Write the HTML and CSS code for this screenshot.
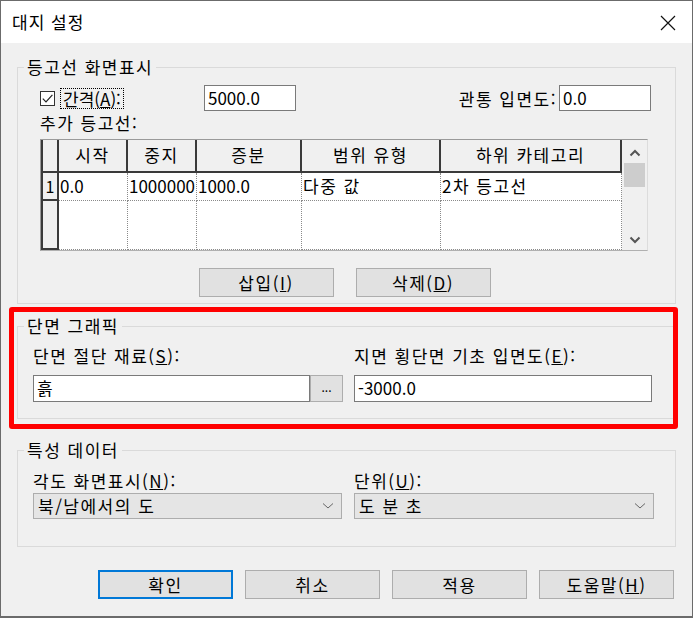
FILE: index.html
```html
<!DOCTYPE html>
<html lang="ko">
<head>
<meta charset="utf-8">
<title>대지 설정</title>
<link rel="stylesheet" href="styles.css">
</head>
<body>
<div class="win">
  <div class="titlebar">
    <span class="title">대지 설정</span>
    <svg class="close" width="16" height="16" viewBox="0 0 16 16"><path d="M1 1 L15 15 M15 1 L1 15" stroke="#111" stroke-width="1.2" fill="none"/></svg>
  </div>
  <div class="content">
    <fieldset class="grp g1">
      <legend>등고선 화면표시</legend>
      <div class="row1">
        <div class="chk-wrap">
          <span class="chk"><svg width="13" height="13" viewBox="0 0 13 13"><path d="M1.8 6.6 L5 9.8 L11.4 2.8" stroke="#222" stroke-width="1.2" fill="none"/></svg></span>
          <span class="focus">간격(<u>A</u>):</span>
        </div>
        <div class="tb w92">5000.0</div>
        <span class="lbl-right">관통 입면도:</span>
        <div class="tb w92">0.0</div>
      </div>
      <div class="lbl2">추가 등고선:</div>
      <div class="tbl">
        <div class="grid">
          <div class="hc corner"></div>
          <div class="hc">시작</div>
          <div class="hc">중지</div>
          <div class="hc">증분</div>
          <div class="hc">범위 유형</div>
          <div class="hc">하위 카테고리</div>
          <div class="rh">1</div>
          <div class="dc">0.0</div>
          <div class="dc">1000000</div>
          <div class="dc">1000.0</div>
          <div class="dc ko">다중 값</div>
          <div class="dc ko">2차 등고선</div>
          <div class="rh"></div>
          <div class="dc"></div>
          <div class="dc"></div>
          <div class="dc"></div>
          <div class="dc"></div>
          <div class="dc"></div>
        </div>
        <div class="sbar">
          <svg class="arr" width="12" height="8" viewBox="0 0 12 8"><path d="M1.5 6.5 L6 2 L10.5 6.5" stroke="#555" stroke-width="2" fill="none"/></svg>
          <div class="thumb"></div>
          <div class="sfill"></div>
          <svg class="arr" width="12" height="8" viewBox="0 0 12 8"><path d="M1.5 1.5 L6 6 L10.5 1.5" stroke="#555" stroke-width="2" fill="none"/></svg>
        </div>
      </div>
      <div class="btnrow">
        <div class="btn">삽입(<u>I</u>)</div>
        <div class="btn">삭제(<u>D</u>)</div>
      </div>
    </fieldset>

    <fieldset class="grp g2">
      <legend>단면 그래픽</legend>
      <div class="cols2">
        <div class="lbl">단면 절단 재료(<u>S</u>):</div>
        <div class="lbl">지면 횡단면 기초 입면도(<u>E</u>):</div>
        <div class="pick">
          <div class="tb grow">흙</div>
          <div class="dots">...</div>
        </div>
        <div class="tb">-3000.0</div>
      </div>
    </fieldset>

    <fieldset class="grp g3">
      <legend>특성 데이터</legend>
      <div class="cols3">
        <div class="lbl">각도 화면표시(<u>N</u>):</div>
        <div class="lbl">단위(<u>U</u>):</div>
        <div class="sel"><span class="ko">북/남에서의 도</span><svg width="12" height="8" viewBox="0 0 12 8"><path d="M1 1.5 L6 6 L11 1.5" stroke="#666" stroke-width="1" fill="none"/></svg></div>
        <div class="sel"><span class="ko">도 분 초</span><svg width="12" height="8" viewBox="0 0 12 8"><path d="M1 1.5 L6 6 L11 1.5" stroke="#666" stroke-width="1" fill="none"/></svg></div>
      </div>
    </fieldset>

    <div class="footer">
      <div class="btn primary">확인</div>
      <div class="btn">취소</div>
      <div class="btn">적용</div>
      <div class="btn">도움말(<u>H</u>)</div>
    </div>
  </div>
  <div class="hilite"></div>
</div>
</body>
</html>
```

FILE: styles.css
```css
* { box-sizing: border-box; }
html, body { margin: 0; padding: 0; background: #f0f0f0; }
body {
  font-family: "Noto Sans CJK KR", "Noto Sans", sans-serif;
  font-size: 17px;
  color: #000;
}
.win {
  position: relative;
  width: 693px;
  height: 618px;
  border: 1px solid #6b6b6b;
  border-bottom-width: 2px;
  background: #f0f0f0;
}
.titlebar {
  height: 42px;
  background: #fff;
  display: flex;
  align-items: center;
  justify-content: space-between;
  padding: 0 16px 0 11px;
}
.title { font-size: 17px; line-height: 20px; letter-spacing: 1px; }
.close { margin-top: 2px; }
.content { padding: 14px 16px 0 16px; }

.ko, .grp legend, .lbl, .lbl2, .lbl-right, .hc, .btn { letter-spacing: 1.5px; }

.grp {
  margin: 0;
  border: 1px solid #dadada;
  min-width: 0;
}
.grp legend {
  padding: 0 3px;
  font-size: 17px;
  line-height: 20px;
}
.g1 { padding: 8px 24px 6px 22px; }
.g1 legend { margin-left: -16px; }
.row1 { display: flex; align-items: center; height: 26px; }
.chk-wrap { width: 164px; display: flex; align-items: center; }
.chk {
  width: 15px; height: 15px;
  border: 1px solid #333;
  background: #fff;
  display: flex; align-items: center; justify-content: center;
}
.focus {
  margin-left: 5px;
  border: 1px dotted #000;
  padding: 0 2px;
  line-height: 19px;
}
.tb {
  height: 26px;
  background: #fff;
  border: 1px solid #7a7a7a;
  padding: 0 3px;
  line-height: 24px;
  white-space: nowrap;
}
.w92 { width: 92px; }
.lbl-right { margin-left: auto; margin-right: 2px; }
.lbl2 { line-height: 23px; }

.tbl {
  margin-top: 5px;
  width: 608px;
  height: 112px;
  display: flex;
  border: 1px solid #9a9a9a;
  border-right-color: #dcdcdc;
  border-bottom-color: #b0b0b0;
  background: #fff;
}
.grid {
  display: grid;
  grid-template-columns: 18px 69px 69px 105px 139px 181px;
  grid-template-rows: 33px 28px 1fr;
  flex: none;
  width: 581px;
}
.hc {
  background: #f0f0f0;
  border-right: 2px solid #3a3a3a;
  border-bottom: 2px solid #3a3a3a;
  text-align: center;
  line-height: 30px;
  white-space: nowrap;
}
.hc.corner { border-left: 2px solid #3a3a3a; }
.rh {
  background: #f0f0f0;
  border-left: 2px solid #3a3a3a;
  border-right: 2px solid #3a3a3a;
  border-bottom: 2px solid #3a3a3a;
  line-height: 26px;
  text-align: center;
  font-size: 16px;
}
.dc {
  border-right: 1px dotted #8a8a8a;
  border-bottom: 1px dotted #8a8a8a;
  line-height: 26px;
  padding-left: 1px;
  white-space: nowrap;
  overflow: hidden;
}
.sbar {
  flex: 1;
  background: #f0f0f0;
  display: flex;
  flex-direction: column;
  align-items: center;
  padding: 9px 0 6px;
}
.thumb { width: 21px; height: 24px; background: #cdcdcd; margin-top: 6px; }
.sfill { flex: 1; }

.btnrow {
  display: flex;
  justify-content: center;
  gap: 22px;
  margin-top: 17px;
  padding-right: 2px;
}
.btn {
  width: 135px;
  height: 29px;
  background: #e1e1e1;
  border: 1px solid #adadad;
  text-align: center;
  line-height: 27px;
}
.btn.primary { border: 2px solid #0078d7; line-height: 25px; }

.g2 { margin-top: 12px; padding: 10px 22px 16px 15px; }
.g2 legend, .g3 legend { margin-left: -9px; }
.cols2 {
  display: grid;
  grid-template-columns: 310px 298px;
  column-gap: 11px;
  row-gap: 9px;
}
.lbl { line-height: 20px; white-space: nowrap; }
.pick { display: flex; }
.grow { flex: 1; }
.dots {
  width: 33px;
  height: 27px;
  background: #e1e1e1;
  border: 1px solid #adadad;
  text-align: center;
  font-size: 12px;
  line-height: 22px;
}
.cols2 .tb { height: 27px; }

.g3 { margin-top: 21px; padding: 11px 20px 27px 15px; }
.cols3 {
  display: grid;
  grid-template-columns: 309px 300px;
  column-gap: 12px;
  row-gap: 2px;
}
.sel {
  height: 26px;
  background: #e5e5e5;
  border: 1px solid #adadad;
  display: flex;
  align-items: center;
  justify-content: space-between;
  padding: 0 7px 0 4px;
  line-height: 24px;
}

.footer {
  display: flex;
  justify-content: flex-end;
  gap: 12px;
  margin-top: 23px;
  padding-right: 2px;
}

.hilite {
  position: absolute;
  left: 8px;
  top: 306px;
  width: 669px;
  height: 122px;
  border: 5px solid #ff0000;
  border-radius: 3px;
  pointer-events: none;
}
```
